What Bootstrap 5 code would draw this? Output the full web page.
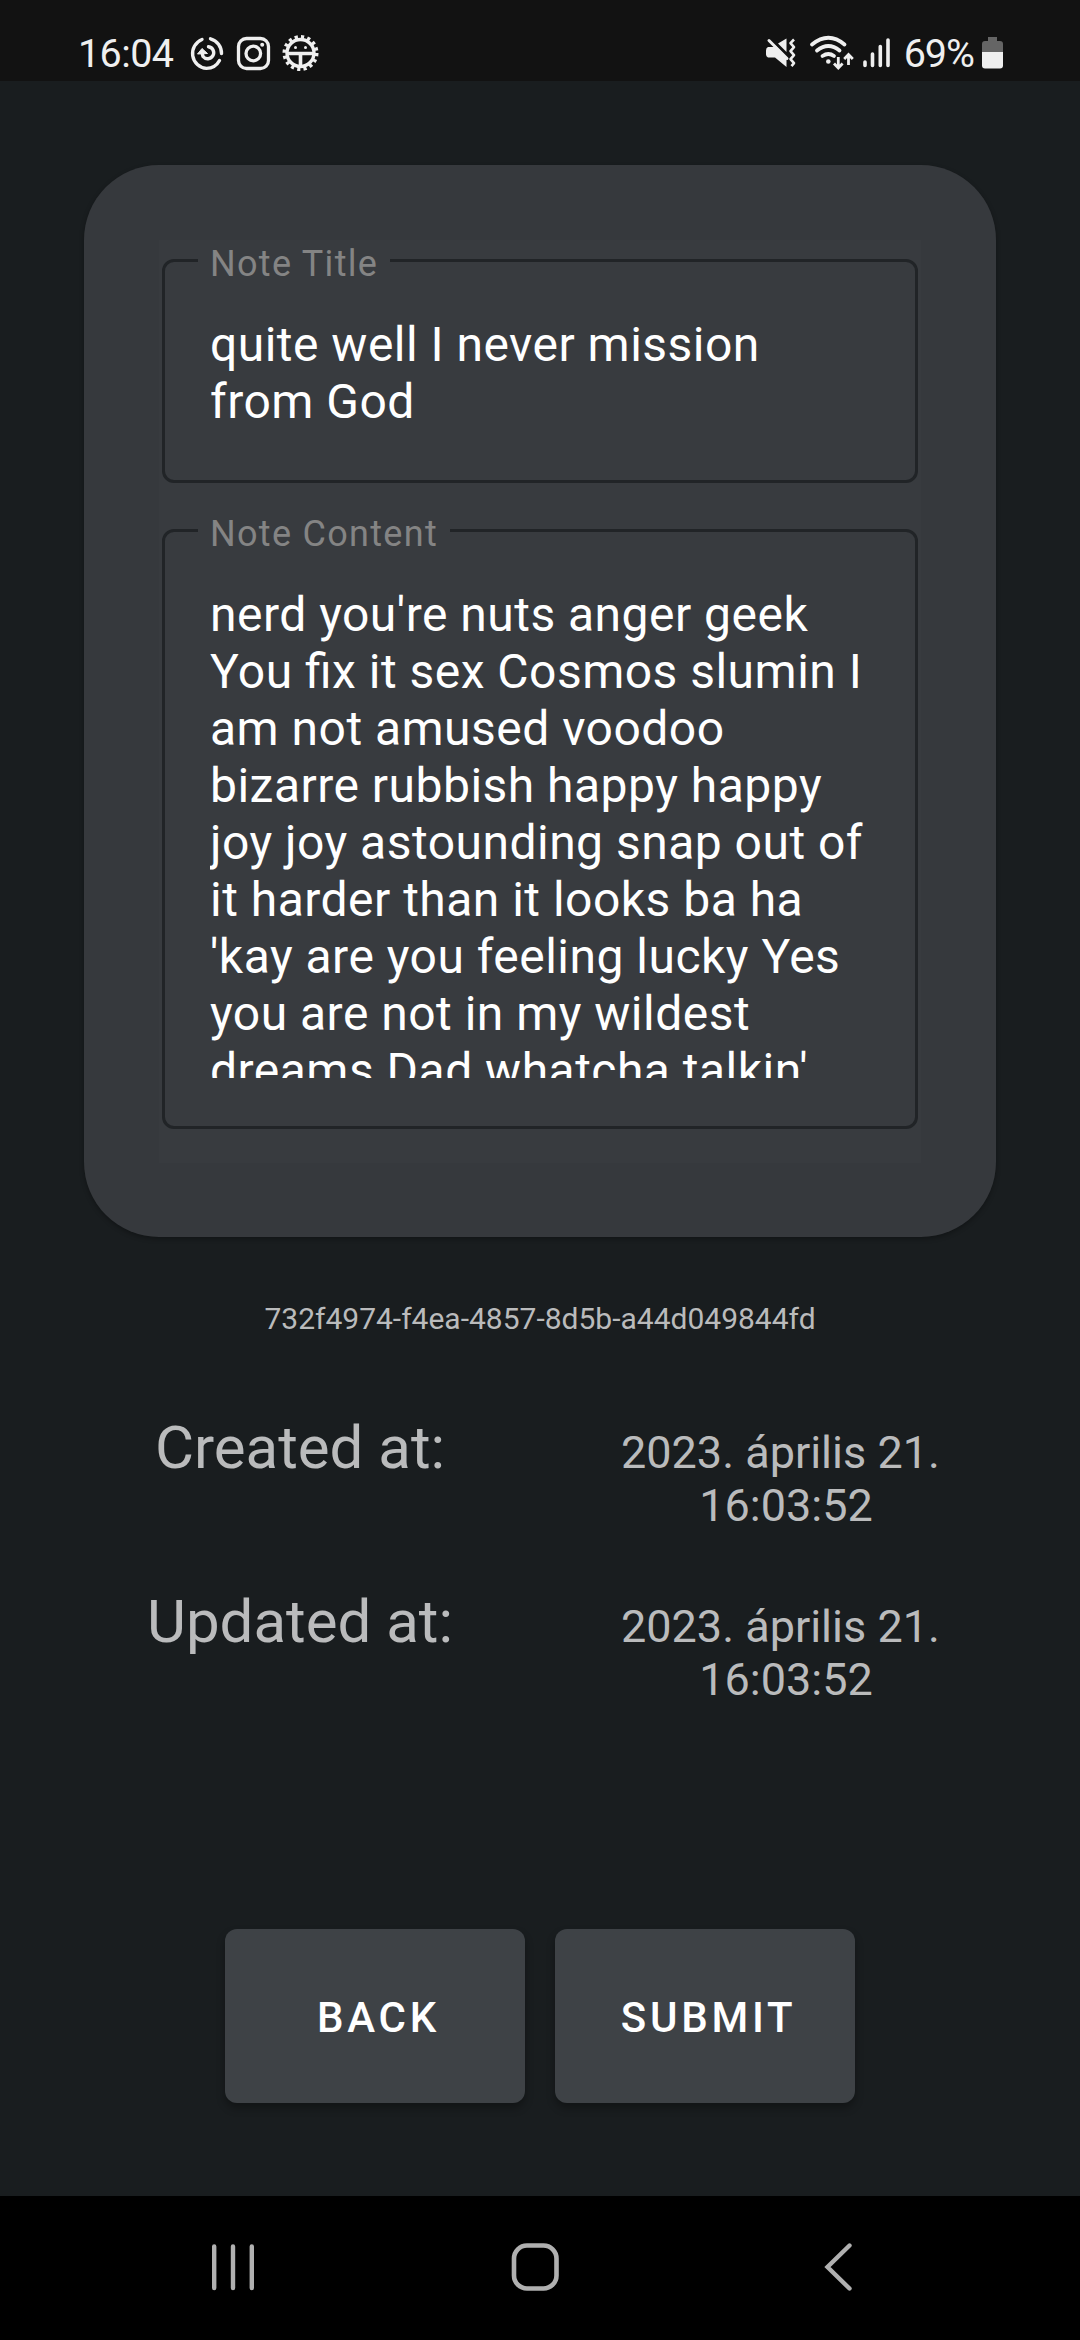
<!DOCTYPE html>
<html lang="hu">
<head>
<meta charset="utf-8">
<meta name="viewport" content="width=device-width, initial-scale=1">
<title>Note</title>
<link href="https://cdn.jsdelivr.net/npm/bootstrap@5.3.0/dist/css/bootstrap.min.css" rel="stylesheet">
<style>
  body { font-family: Roboto, "Noto Sans", sans-serif; background: #191d1f; color: #babbbc; width: 1080px; height: 2340px; overflow: hidden; }
  .status-bar { height: 81px; background: #121212; color: #efefef; padding: 0 76px 0 78px; }
  .clock { padding-top: 31px; font-size: 39.5px; line-height: 46px; letter-spacing: -.6px; }
  .charge { margin-left: 7px; letter-spacing: -1px; }
  .status-bar svg { display: block; }
  .note-card { margin: 84px 84px 0; height: 1072px; padding: 75px; border-radius: 75px; background: #36393d; box-shadow: 0 2px 5px rgba(0,0,0,.3); }
  .note-form { height: 923px; padding: 19px 3px 0; background: #383b3f; gap: 46px; }
  .field { border: 3px solid #212427; border-radius: 12px; padding: 54px 45px 0; color: #fff; font-size: 48px; line-height: 57px; letter-spacing: .48px; font-feature-settings: "liga" 1; white-space: nowrap; }
  .field-title { height: 224px; }
  .field-content { height: 600px; }
  .field-text { height: 492px; overflow: hidden; }
  .field-label { top: -19px; left: 33px; padding: 0 12px; background: #383b3f; color: #848484; font-size: 36px; line-height: 42px; letter-spacing: 1.3px; }
  .uuid { margin-top: 64px; font-size: 30px; line-height: 36px; }
  .stamps { margin: 76px 51px 0 57px; }
  .stamp-row { height: 174px; }
  .stamp-label { font-size: 60px; line-height: 70px; }
  .stamp-value { font-size: 45px; line-height: 53px; }
  .actions { margin-top: 168px; gap: 30px; }
  .btn-note { --bs-btn-color: #fff; --bs-btn-bg: #3e4246; --bs-btn-hover-color: #fff; --bs-btn-hover-bg: #474b4f; width: 300px; height: 174px; border: 0; border-radius: 12px; padding: 8px 12px 6px 19px; font-size: 42px; font-weight: 500; letter-spacing: 3.75px; box-shadow: 0 5px 8px rgba(0,0,0,.32); }
  .nav-keys { height: 144px; background: #000; padding: 0 226px 0 209px; }
  .key-home { margin-right: 9px; }
</style>
</head>
<body class="d-flex flex-column">
  <header class="status-bar d-flex justify-content-between flex-shrink-0">
    <div class="d-flex">
      <span class="clock">16:04</span>
      <svg width="150" height="81" viewBox="180 0 150 81" fill="none" stroke="#efefef" style="margin-left:7px">
        <g stroke-width="3.4" stroke-linecap="round">
          <path d="M202 39.5A15 15 0 0 0 206.500 68.400A15 15 0 0 0 219.500 60.500"/>
          <path d="M210.500 38.800A15 15 0 0 1 221.500 53.500"/>
          <path d="M208.500 46.800A6 6 0 1 1 203 56.500L202 52.500"/>
        </g>
        <path d="M197.500 54L202 48.500L207.500 53.500Z" fill="#efefef" stroke="#efefef" stroke-width="1"/>
        <rect x="238.500" y="38.500" width="30" height="30" rx="8" stroke-width="3.300"/>
        <circle cx="253.300" cy="53.500" r="7.300" stroke-width="3.300"/>
        <circle cx="262.200" cy="44.800" r="2" fill="#efefef" stroke="none"/>
        <circle cx="300.500" cy="53" r="16" stroke-width="4" stroke-dasharray="3.142 3.142"/>
        <circle cx="300.500" cy="53" r="13.500" stroke-width="3.400"/>
        <path d="M287 53.500H314M300.500 53V66" stroke-width="3.600"/>
        <g fill="#efefef" stroke="none"><circle cx="295.500" cy="47.500" r="1.500"/><circle cx="305.500" cy="47.500" r="1.500"/></g>
      </svg>
    </div>
    <div class="d-flex">
      <svg width="134" height="81" viewBox="762 0 134 81" fill="none" stroke="#efefef">
        <path d="M767 47h6l1.500-1.500L785.500 57V67L774 57.500h-7q-2-1-2-3v-4q0-3 2-3.500Z" fill="#efefef" stroke="none"/>
        <path d="M777 43.500L785.500 38.500V52Z" fill="#efefef" stroke="none"/>
        <path d="M768 40.500L786 58.500" stroke-width="3" stroke-linecap="round"/>
        <path d="M793 39.500l-3.500 3.600 3.500 4-3.500 4 3.500 4-3.500 4 3.500 4-2.500 3" stroke-width="2.600" stroke-linejoin="round"/>
        <g stroke-width="3.800" stroke-linecap="round">
          <path d="M811 44.500Q827.500 31 843.500 44.500"/>
          <path d="M816 50.500Q827.500 41.500 838.500 50.500"/>
          <path d="M821.500 56Q827.500 52 833 56"/>
        </g>
        <circle cx="827.300" cy="61.500" r="2.300" fill="#efefef" stroke="none"/>
        <path d="M837.300 57v10.500M833 63.500l4.300 4.500 4.300-4.500M847.500 65V55M843.200 59l4.300-4.500 4.300 4.500" stroke-width="2.800"/>
        <path d="M864 62v3.500M871.500 54v11.500M879.300 46.500v19M887 40v25.500" stroke-width="3.600" stroke-linecap="round"/>
      </svg>
      <span class="clock charge">69%</span>
      <svg width="24" height="81" viewBox="980 0 24 81" style="margin-left:6px">
        <path d="M988 37h9v4h3q3 0 3 3v9h-21v-9q0-3 3-3h3Z" fill="#656565"/>
        <path d="M982 52h21v13.500q0 3-3 3h-15q-3 0-3-3Z" fill="#efefef"/>
      </svg>
    </div>
  </header>

  <main class="flex-grow-1">
    <section class="note-card">
      <div class="note-form d-flex flex-column">
        <div class="field field-title position-relative">
          <label class="field-label position-absolute">Note Title</label>
          quite well I never mission<br>from God
        </div>
        <div class="field field-content position-relative">
          <label class="field-label position-absolute">Note Content</label>
          <div class="field-text">nerd you're nuts anger geek<br>You fix it sex Cosmos slumin I<br>am not amused voodoo<br>bizarre rubbish happy happy<br>joy joy astounding snap out of<br>it harder than it looks ba ha<br>'kay are you feeling lucky Yes<br>you are not in my wildest<br>dreams Dad whatcha talkin'</div>
        </div>
      </div>
    </section>

    <div class="uuid text-center">732f4974-f4ea-4857-8d5b-a44d049844fd</div>

    <section class="stamps">
      <div class="stamp-row row g-0 align-items-baseline text-center">
        <div class="col-6 stamp-label">Created at:</div>
        <div class="col-6 stamp-value">2023. április 21.&nbsp;<br>16:03:52</div>
      </div>
      <div class="stamp-row row g-0 align-items-baseline text-center">
        <div class="col-6 stamp-label">Updated at:</div>
        <div class="col-6 stamp-value">2023. április 21.&nbsp;<br>16:03:52</div>
      </div>
    </section>

    <div class="actions d-flex justify-content-center">
      <button type="button" class="btn btn-note">BACK</button>
      <button type="button" class="btn btn-note">SUBMIT</button>
    </div>
  </main>

  <nav class="nav-keys d-flex justify-content-between align-items-start flex-shrink-0">
    <svg width="48" height="144" viewBox="209 0 48 144" stroke="#b0b0b0" stroke-width="4.400" stroke-linecap="round"><path d="M214.200 50.500V92M233 50.500V92M251.800 50.500V92"/></svg>
    <svg class="key-home" width="50" height="144" viewBox="510 0 50 144" fill="none" stroke="#b0b0b0" stroke-width="4.600"><rect x="514" y="49.500" width="42.500" height="43" rx="13"/></svg>
    <svg width="32" height="144" viewBox="822 0 32 144" fill="none" stroke="#b0b0b0" stroke-width="4.400" stroke-linecap="round"><path d="M849.500 49.500L827.500 71L849.500 92.500"/></svg>
  </nav>
<script src="https://cdn.jsdelivr.net/npm/bootstrap@5.3.0/dist/js/bootstrap.bundle.min.js"></script>
</body>
</html>
